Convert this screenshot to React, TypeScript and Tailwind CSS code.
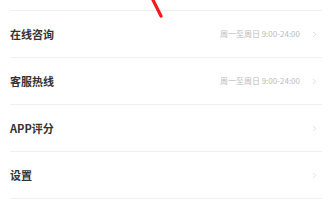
import { ChevronRight } from "lucide-react";

type Row = { label: string; hint?: string };

const rows: Row[] = [
  { label: "在线咨询", hint: "周一至周日 9:00-24:00" },
  { label: "客服热线", hint: "周一至周日 9:00-24:00" },
  { label: "APP评分" },
  { label: "设置" },
];

export default function App() {
  return (
    <div
      className="relative w-[330px] h-[200px] overflow-hidden bg-white"
      style={{ fontFamily: '"Noto Sans CJK SC", "Noto Sans", sans-serif' }}
    >
      <div className="h-[10px]" />
      <div className="pl-[10px] pr-[8px]">
        {rows.map((row) => (
          <div
            key={row.label}
            className="flex items-center h-[47px] border-t border-[#f0f0f0] pr-[3px]"
          >
            <span className="text-[11px] font-bold text-[#333] leading-none">
              {row.label}
            </span>
            <div className="ml-auto flex items-center gap-[10px]">
              {row.hint && (
                <span className="text-[8px] text-[#bbb] leading-none">
                  {row.hint}
                </span>
              )}
              <ChevronRight className="w-[9px] h-[9px] text-[#c8c8c8]" strokeWidth={1.6} />
            </div>
          </div>
        ))}
        <div className="border-t border-[#f0f0f0]" />
      </div>

      {/* red annotation stroke */}
      <svg
        className="absolute left-0 top-0 pointer-events-none"
        width="330"
        height="30"
        viewBox="0 0 330 30"
      >
        <line
          x1="152"
          y1="-2"
          x2="161"
          y2="16"
          stroke="#f21b1b"
          strokeWidth="3.2"
          strokeLinecap="round"
        />
      </svg>
    </div>
  );
}
